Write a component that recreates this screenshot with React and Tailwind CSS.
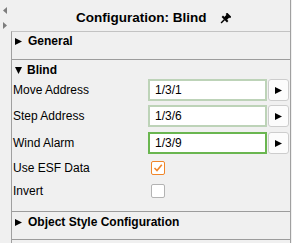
import React from 'react'

function Tri({ dir = 'right', size = 7, color = '#000' }) {
    // 小三角形
    const paths = {
        right: 'M0 0 L7 3.5 L0 7 Z',
        left: 'M7 0 L0 3.5 L7 7 Z',
        down: 'M0 0 L7 0 L3.5 7 Z',
    }
    return (
        <svg width={size} height={size} viewBox="0 0 7 7" className="shrink-0">
            <path d={paths[dir]} fill={color} />
        </svg>
    )
}

function Pin() {
    return (
        <svg width="12" height="12" viewBox="0 0 12 12" className="shrink-0">
            <g transform="rotate(45 6 6)" fill="#000">
                <rect x="3" y="0" width="6" height="2" />
                <rect x="4.1" y="1.6" width="3.8" height="3.8" />
                <rect x="2.2" y="5" width="7.6" height="2" />
                <rect x="5.3" y="6.6" width="1.4" height="5" />
            </g>
        </svg>
    )
}

function AddressRow({ label, value, focused, className = '' }) {
    return (
        <div className={`flex items-center h-[22px] ${className}`}>
            <div className="w-[136px] pl-[1px]">{label}</div>
            <div className={`w-[119px] h-[22px] bg-white border-2 flex items-center pl-[5px] ${focused ? 'border-[#6ab650]' : 'border-[#bdd3b8]'}`}>
                {value}
            </div>
            <button className="ml-[1px] w-[21px] h-[22px] bg-[#fcfcfc] border border-[#cdcdcd] rounded-[3px] flex items-center justify-center">
                <Tri dir="right" size={7} />
            </button>
        </div>
    )
}

function CheckRow({ label, checked }) {
    return (
        <div className="flex items-center h-[23px]">
            <div className="w-[136px] pl-[1px]">{label}</div>
            <div className={`ml-[3px] w-[14px] h-[14px] bg-white rounded-[2px] border flex items-center justify-center ${checked ? 'border-[#f0862a]' : 'border-[#b3b3b3]'}`}>
                {checked && (
                    <svg width="10" height="10" viewBox="0 0 10 10">
                        <path d="M1.5 5 L4 7.5 L8.8 1.8" stroke="#f0862a" strokeWidth="1.6" fill="none" />
                    </svg>
                )}
            </div>
        </div>
    )
}

export default function App() {
    return (
        <div className="w-[292px] h-[243px] bg-[#f0f0f0] flex overflow-hidden text-[12px] text-black font-['Liberation_Sans',Arial,sans-serif]">
            {/* 左侧箭头 */}
            <div className="w-[11px] flex flex-col pl-[3px] pt-[7px] gap-[8px]">
                <svg width="4" height="7" viewBox="0 0 4 7"><path d="M4 0 L0 3.5 L4 7 Z" fill="#7d7d7d" /></svg>
                <svg width="4" height="7" viewBox="0 0 4 7"><path d="M0 0 L4 3.5 L0 7 Z" fill="#7d7d7d" /></svg>
            </div>

            <div className="w-[280px] flex flex-col border-r border-[#a0a0a0]">
                {/* 标题 */}
                <div className="h-[31px] flex items-center pl-[65px] pt-[6px] gap-[13px]">
                    <span className="font-bold text-[13.5px]">Configuration: Blind</span>
                    <Pin />
                </div>

                <div className="flex-1 flex flex-col border-t border-t-[#c3c3c3] border-l border-l-[#a0a0a0]">
                    {/* General */}
                    <div className="h-[28px] border-b border-[#9c9c9c] flex items-start gap-[6px] pl-[3px] pt-[2px] font-bold">
                        <div className="h-[14px] flex items-center"><Tri dir="right" /></div>
                        <span className="leading-[14px]">General</span>
                    </div>

                    {/* Blind */}
                    <div className="h-[152px] border-b border-[#9c9c9c] flex flex-col">
                        <div className="h-[19px] flex items-center gap-[5px] pl-[3px] pt-[1px] font-bold">
                            <Tri dir="down" />
                            <span>Blind</span>
                        </div>
                        <AddressRow label="Move Address" value="1/3/1" />
                        <AddressRow label="Step Address" value="1/3/6" className="mt-[4px]" />
                        <AddressRow label="Wind Alarm" value="1/3/9" focused className="mt-[5px]" />
                        <div className="mt-[2px]">
                            <CheckRow label="Use ESF Data" checked />
                            <CheckRow label="Invert" />
                        </div>
                    </div>

                    {/* Object Style Configuration */}
                    <div className="h-[28px] border-b border-[#9c9c9c] flex items-start gap-[6px] pl-[3px] pt-[3px] font-bold">
                        <div className="h-[14px] flex items-center"><Tri dir="right" /></div>
                        <span className="leading-[14px]">Object Style Configuration</span>
                    </div>
                </div>
            </div>
        </div>
    )
}
